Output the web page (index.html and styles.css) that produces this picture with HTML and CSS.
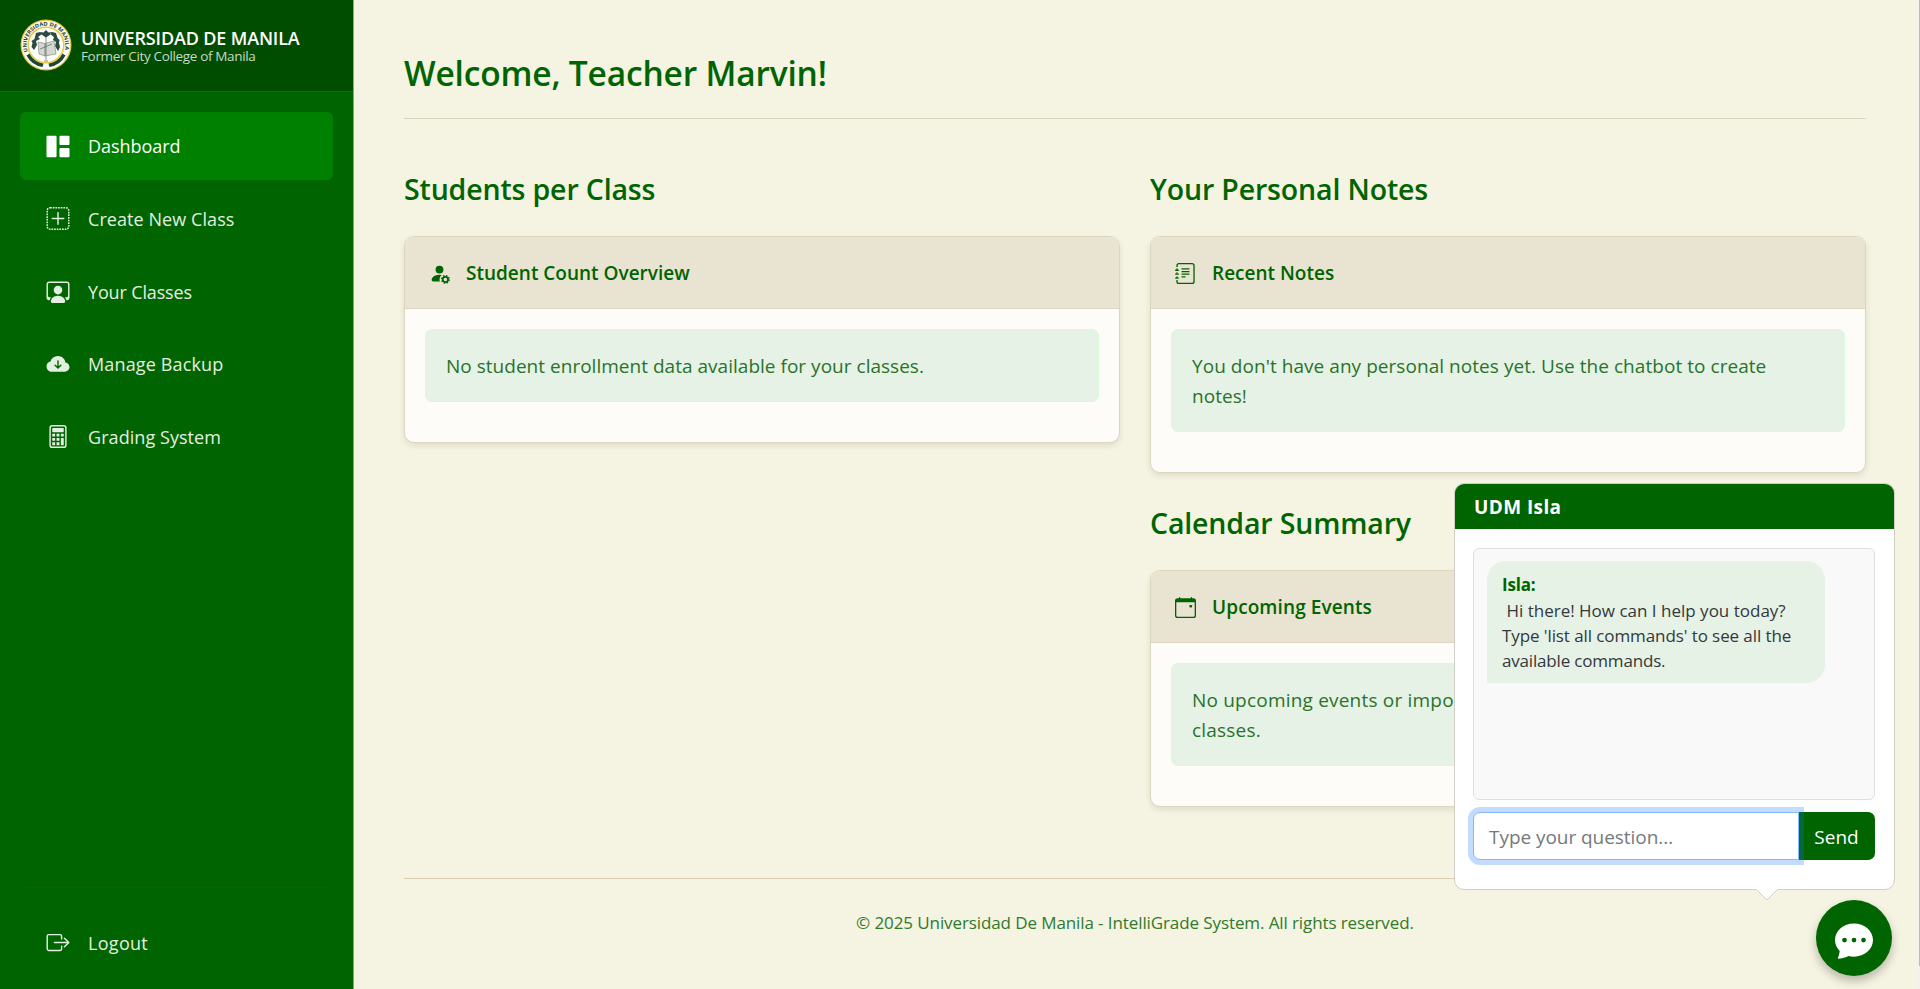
FILE: index.html
```html
<!DOCTYPE html>
<html lang="en">
<head>
<meta charset="utf-8">
<title>Dashboard - IntelliGrade System</title>
<link rel="stylesheet" href="styles.css">
</head>
<body>
<div class="page">
  <aside class="sidebar">
    <div class="brand">
      <svg class="brand-logo" viewBox="0 0 52 52">
        <defs><path id="ring" d="M7.900 32.600a19.300 19.300 0 1 1 36.200 0"/></defs>
        <circle cx="26" cy="26" r="25.500" fill="#e3c53c"/>
        <circle cx="26" cy="26" r="24.300" fill="#fbfaf2"/>
        <path d="M6.500 36.500a22 22 0 0 0 16 11.500l1-3.600a19 19 0 0 1-13.800-10zM45.500 36.500a22 22 0 0 1-16 11.500l-1-3.600a19 19 0 0 0 13.800-10z" fill="#1d4634"/>
        <circle cx="26" cy="26" r="17.800" fill="#fdfdfa" stroke="#e6c945" stroke-width="1.600"/>
        <text class="seal-text"><textPath href="#ring" textLength="72" lengthAdjust="spacingAndGlyphs">UNIVERSIDAD DE MANILA</textPath></text>
        <path d="M26 11l2.500 2.500 3-.5-1 2.600-4.500 3-4.500-3-1-2.600 3 .5zM16 14l4-1 2 2-4 3 2 2-4 2 1 4-3 5-2.500-3 1-4-1-2 3-2zM36 14l-4-1-2 2 4 3-1 3 3 2-1 4 3 5 2-4-1-4 .5-3-2-2z" fill="#2b4a40"/>
        <path d="M18 23l7 1.500V37l-6-2zM34 22l-9 2.500V37l11-2z" fill="#d5d7d3" stroke="#888d88" stroke-width=".7"/>
        <path d="M26 18v23M20 30l12-5M24 42h4" stroke="#69716c" stroke-width=".8"/>
        <circle cx="26" cy="47" r="1.700" fill="#fff"/>
      </svg>
      <div class="brand-copy">
        <div class="brand-name">UNIVERSIDAD DE MANILA</div>
        <div class="brand-sub">Former City College of Manila</div>
      </div>
    </div>
    <nav class="menu">
      <a class="item active"><svg class="icon" viewBox="0 0 16 16"><path d="M0 1.200a.7.700 0 0 1 .7-.7h5.600a.7.700 0 0 1 .7.700v13.600a.7.700 0 0 1-.7.700H.7a.7.700 0 0 1-.7-.7zM9 1.200a.7.700 0 0 1 .7-.7h5.600a.7.700 0 0 1 .7.700v5.100a.7.700 0 0 1-.7.700H9.700a.7.700 0 0 1-.7-.7zM9 9.700a.7.700 0 0 1 .7-.7h5.600a.7.700 0 0 1 .7.700v5.100a.7.700 0 0 1-.7.700H9.700a.7.700 0 0 1-.7-.7z"/></svg><span class="t-dash">Dashboard</span></a>
      <a class="item"><svg class="icon" viewBox="0 0 16 16"><rect x=".5" y=".5" width="15" height="15" rx="2" fill="none" stroke="currentColor" stroke-dasharray="1.200 .65"/><path d="M8.500 4a.5.500 0 0 0-1 0v3.500H4a.5.500 0 0 0 0 1h3.500V12a.5.500 0 0 0 1 0V8.500H12a.5.500 0 0 0 0-1H8.500z"/></svg><span class="t-create">Create New Class</span></a>
      <a class="item"><svg class="icon" viewBox="0 0 16 16"><path d="M11 7a3 3 0 1 1-6 0 3 3 0 0 1 6 0z"/><path d="M2 1a2 2 0 0 0-2 2v9.500A1.500 1.500 0 0 0 1.500 14h.653a5.400 5.400 0 0 1 1.066-2H2a1 1 0 0 1-1-1V3a1 1 0 0 1 1-1h12a1 1 0 0 1 1 1v8a1 1 0 0 1-1 1h-1.220c.554.654.89 1.373 1.066 2h.653a1.500 1.500 0 0 0 1.500-1.500V3a2 2 0 0 0-2-2z"/><path d="M3 15c0-1 1-4 5-4s5 3 5 4c0 .5-.4 1-1 1H4c-.6 0-1-.5-1-1z"/></svg><span class="t-your">Your Classes</span></a>
      <a class="item"><svg class="icon" viewBox="0 0 16 16"><path d="M8 2a5.530 5.530 0 0 0-3.594 1.342c-.766.66-1.321 1.520-1.464 2.383C1.266 6.095 0 7.555 0 9.318 0 11.366 1.708 13 3.781 13h8.906C14.502 13 16 11.570 16 9.773c0-1.636-1.242-2.969-2.834-3.194C12.923 3.999 10.690 2 8 2m2.354 6.854-2 2a.5.500 0 0 1-.708 0l-2-2a.5.500 0 1 1 .708-.708L7.500 9.293V5.500a.5.500 0 0 1 1 0v3.793l1.146-1.147a.5.500 0 0 1 .708.708"/></svg><span class="t-backup">Manage Backup</span></a>
      <a class="item"><svg class="icon" viewBox="0 0 16 16"><path fill-rule="evenodd" d="M4 0h8a2 2 0 0 1 2 2v12a2 2 0 0 1-2 2H4a2 2 0 0 1-2-2V2a2 2 0 0 1 2-2m0 1a1 1 0 0 0-1 1v12a1 1 0 0 0 1 1h8a1 1 0 0 0 1-1V2a1 1 0 0 0-1-1z"/><path d="M4 2.500a.5.500 0 0 1 .5-.5h7a.5.500 0 0 1 .5.500v2a.5.500 0 0 1-.5.500h-7a.5.500 0 0 1-.5-.5zM4 6h2v2H4zM7 6h2v2H7zM10 6h2v2h-2zM4 9h2v2H4zM7 9h2v2H7zM4 12h2v2H4zM7 12h2v2H7zM10 9h2v5h-2z"/></svg><span class="t-grading">Grading System</span></a>
    </nav>
    <div class="logout">
      <a class="item"><svg class="icon" viewBox="0 0 16 16"><path d="M10 12.500a.5.500 0 0 1-.5.500h-8a.5.500 0 0 1-.5-.5v-9a.5.500 0 0 1 .5-.5h8a.5.500 0 0 1 .5.500v2a.5.500 0 0 0 1 0v-2A1.500 1.500 0 0 0 9.500 2h-8A1.500 1.500 0 0 0 0 3.500v9A1.500 1.500 0 0 0 1.500 14h8a1.500 1.500 0 0 0 1.500-1.500v-2a.5.500 0 0 0-1 0z"/><path d="M15.854 8.354a.5.500 0 0 0 0-.708l-3-3a.5.500 0 0 0-.708.708L14.293 7.500H5.500a.5.500 0 0 0 0 1h8.793l-2.147 2.146a.5.500 0 0 0 .708.708z"/></svg><span class="t-logout">Logout</span></a>
    </div>
  </aside>

  <main class="content">
    <h1 class="welcome">Welcome, Teacher Marvin!</h1>
    <div class="columns">
      <section class="col">
        <h2 class="title">Students per Class</h2>
        <article class="card">
          <header class="card-head"><svg class="head-icon" viewBox="0 0 16 16"><path d="M11 5a3 3 0 1 1-6 0 3 3 0 0 1 6 0m-9 8c0 1 1 1 1 1h5.256A4.500 4.500 0 0 1 8 12.500a4.500 4.500 0 0 1 1.544-3.393Q8.844 9.002 8 9c-5 0-6 3-6 4"/><circle cx="12.500" cy="12.500" r="2" fill="none" stroke="currentColor" stroke-width="1.300"/><circle cx="12.500" cy="12.500" r="2.900" fill="none" stroke="currentColor" stroke-width="1" stroke-dasharray="1.200 1.077"/></svg><span>Student Count Overview</span></header>
          <div class="card-body"><div class="alert"><span class="t-noenroll">No student enrollment data available for your classes.</span></div></div>
        </article>
      </section>
      <section class="col">
        <h2 class="title">Your Personal Notes</h2>
        <article class="card">
          <header class="card-head"><svg class="head-icon" viewBox="0 0 16 16"><path d="M5 4h6v1H5zM5 6h6v1H5zM5 8h6v1H5zM5 10h3v1H5z"/><path d="M3 0h10a2 2 0 0 1 2 2v12a2 2 0 0 1-2 2H3a2 2 0 0 1-2-2v-1h1v1a1 1 0 0 0 1 1h10a1 1 0 0 0 1-1V2a1 1 0 0 0-1-1H3a1 1 0 0 0-1 1v1H1V2a2 2 0 0 1 2-2"/><path d="M1 5v-.5a.5.500 0 0 1 1 0V5h.5a.5.500 0 0 1 0 1h-2a.5.500 0 0 1 0-1zm0 3v-.5a.5.500 0 0 1 1 0V8h.5a.5.500 0 0 1 0 1h-2a.5.500 0 0 1 0-1zm0 3v-.5a.5.500 0 0 1 1 0v.5h.5a.5.500 0 0 1 0 1h-2a.5.500 0 0 1 0-1z"/></svg><span>Recent Notes</span></header>
          <div class="card-body"><div class="alert"><span class="t-nonotes">You don't have any personal notes yet. Use the chatbot to create<br>notes!</span></div></div>
        </article>
        <h2 class="title second">Calendar Summary</h2>
        <article class="card">
          <header class="card-head"><svg class="head-icon" viewBox="0 0 16 16"><path d="M11 6.500a.5.500 0 0 1 .5-.5h1a.5.500 0 0 1 .5.500v1a.5.500 0 0 1-.5.500h-1a.5.500 0 0 1-.5-.5z"/><path d="M3.500 0a.5.500 0 0 1 .5.500V1h8V.5a.5.500 0 0 1 1 0V1h1a2 2 0 0 1 2 2v11a2 2 0 0 1-2 2H2a2 2 0 0 1-2-2V3a2 2 0 0 1 2-2h1V.5a.5.500 0 0 1 .5-.5M1 4v10a1 1 0 0 0 1 1h12a1 1 0 0 0 1-1V4z"/></svg><span class="t-upcoming">Upcoming Events</span></header>
          <div class="card-body"><div class="alert"><span class="t-noevents">No upcoming events or important dates found for your<br>classes.</span></div></div>
        </article>
      </section>
    </div>
    <footer class="footer"><span>© 2025 Universidad De Manila - IntelliGrade System. All rights reserved.</span></footer>
  </main>
</div>

<section class="chat">
  <header class="chat-head"><span>UDM Isla</span></header>
  <div class="chat-body">
    <div class="messages">
      <div class="bubble">
        <strong class="sender">Isla:</strong>
        <p class="message"><span>&nbsp;Hi there! How can I help you today?</span><br><span class="t-type">Type 'list all commands' to see all the</span><br><span class="t-avail">available commands.</span></p>
      </div>
    </div>
    <div class="ask">
      <div class="ask-input"><span>Type your question...</span></div>
      <div class="ask-send"><span>Send</span></div>
    </div>
  </div>
  <svg class="chat-arrow" viewBox="0 0 22 12"><path d="M0 0h22L11 11z" fill="#fff"/><path d="M.5 .5L11 11 21.500 .5" fill="none" stroke="#cfcfc5"/></svg>
</section>
<button class="chat-toggle"><svg class="toggle-icon" viewBox="0 0 16 16"><path d="M16 8c0 3.866-3.582 7-8 7a9 9 0 0 1-2.347-.306c-.584.296-1.925.864-4.181 1.234-.2.032-.352-.176-.273-.362.354-.836.674-1.950.77-2.966C.744 11.370 0 9.760 0 8c0-3.866 3.582-7 8-7s8 3.134 8 7M5 8a1 1 0 1 0-2 0 1 1 0 0 0 2 0m4 0a1 1 0 1 0-2 0 1 1 0 0 0 2 0m3 1a1 1 0 1 0 0-2 1 1 0 0 0 0 2"/></svg></button>
<div class="scroll-edge"><div class="scroll-thumb"></div></div>
</body>
</html>
```
FILE: styles.css
```css
* { box-sizing: border-box; }
body {
  margin: 0;
  height: 989px;
  overflow: hidden;
  background: #f5f3e1;
  font-family: "Open Sans", "Noto Sans", sans-serif;
  font-size: 19px;
  line-height: 30px;
  color: #006400;
}
svg { display: block; fill: currentColor; flex: none; }
span { white-space: nowrap; }
.page { display: flex; height: 989px; }

/* Sidebar */
.sidebar {
  display: flex;
  flex-direction: column;
  width: 354px;
  flex: none;
  background: #006400;
  border-right: 1px solid #7fb077;
  color: #e3efe0;
}
.brand {
  display: flex;
  align-items: center;
  gap: 9px;
  height: 92px;
  padding: 0 20px 1px;
  background: #004d00;
  border-bottom: 1px solid #007500;
}
.brand-logo { width: 52px; height: 52px; }
.seal-text { font-size: 5.200px; font-weight: 700; fill: #23402f; }
.brand-copy { padding-top: 1px; }
.brand-name { font-size: 18px; font-weight: 600; line-height: 20px; color: #fff; white-space: nowrap; letter-spacing: -.15px; }
.brand-sub { font-size: 13.500px; line-height: 16px; color: #c9d8c6; white-space: nowrap; letter-spacing: -.35px; }
.menu { display: flex; flex-direction: column; gap: 5px; padding: 20px 20px 0; }
.item {
  display: flex;
  align-items: center;
  gap: 18px;
  height: 67.650px;
  padding: 1px 0 0 26px;
  border-radius: 6px;
  font-size: 18px;
}
.active { background: #008000; color: #fff; }
.icon { width: 24px; height: 23px; }
.t-dash { letter-spacing: -.05px; }
.t-create { letter-spacing: .07px; }
.t-your { letter-spacing: -.15px; }
.t-backup { letter-spacing: .14px; }
.t-grading { letter-spacing: .06px; }
.t-logout { letter-spacing: .3px; }
.logout { margin: auto 20px 13px; padding-top: 20px; border-top: 1px solid #006a00; }

/* Main column */
.content { flex: 1; padding: 50px 54px 0 50px; }
.welcome {
  margin: 0;
  height: 69px;
  border-bottom: 1px solid #d8d4bc;
  font-size: 33.500px;
  font-weight: 600;
  line-height: 46px;
  letter-spacing: -.18px;
}
.columns { display: grid; grid-template-columns: 716px 716px; gap: 30px; height: 759px; padding-top: 50px; }
.title { margin: 0 0 26px; font-size: 28.500px; font-weight: 600; line-height: 41px; letter-spacing: -.15px; white-space: nowrap; }
.second { margin-top: 30px; }
.card {
  border: 1px solid #dcd6bf;
  border-radius: 10px;
  background: #fdfcf8;
  box-shadow: 0 3px 6px rgba(0, 0, 0, .09);
  overflow: hidden;
}
.card-head {
  display: flex;
  align-items: center;
  gap: 16px;
  height: 72px;
  padding: 1px 0 0 24px;
  background: #e9e4d1;
  border-bottom: 1px solid #dcd6bf;
  font-weight: 600;
}
.head-icon { width: 21px; height: 21px; }
.t-upcoming { letter-spacing: .1px; }
.card-body { padding: 20px 20px 40px; }
.alert {
  padding: 21px 20px 20px;
  border: 1px solid #d8f8d8;
  border-radius: 7px;
  background: #e6f2e6;
  color: #2a722a;
}
.t-noenroll { letter-spacing: .02px; }
.t-nonotes { letter-spacing: .05px; }
.t-noevents { letter-spacing: .2px; }
.footer {
  display: flex;
  justify-content: center;
  border-top: 1px solid #d8ccb0;
  padding-top: 29px;
  font-size: 17px;
  letter-spacing: -.1px;
  color: #2f7a2b;
}

/* Chat popover */
.chat {
  position: absolute;
  left: 1454px;
  top: 483px;
  width: 441px;
  height: 407px;
  border: 1px solid #cfcfc5;
  border-radius: 10px;
  background: #fff;
}
.chat-head {
  display: flex;
  align-items: center;
  height: 45px;
  padding-left: 19px;
  border-radius: 9px 9px 0 0;
  background: #006400;
  color: #fff;
  font-weight: 700;
  letter-spacing: .4px;
}
.chat-body { padding: 19px 19px 0 18px; }
.messages {
  height: 252px;
  padding: 12px 13px;
  border: 1px solid #dfdfdf;
  border-radius: 6px;
  background: #f9f9f9;
}
.bubble {
  width: 338px;
  height: 122px;
  padding: 10px 15px;
  border-radius: 19px 19px 19px 0;
  background: #e6f2e6;
  font-size: 17px;
}
.sender { display: block; line-height: 27px; letter-spacing: -.2px; }
.message { margin: 1px 0 0; line-height: 24.800px; color: #33383c; }
.t-type { letter-spacing: -.09px; }
.t-avail { letter-spacing: -.18px; }
.ask { display: flex; height: 48px; margin-top: 12px; }
.ask-input {
  position: relative;
  display: flex;
  align-items: center;
  width: 326px;
  padding: 2px 0 0 15px;
  border: 1px solid #86b7fe;
  border-radius: 7px 0 0 7px;
  background: #fff;
  box-shadow: 0 0 0 5px rgba(13, 110, 253, .25);
  color: #75797d;
  letter-spacing: -.05px;
}
.ask-send {
  display: flex;
  align-items: center;
  justify-content: center;
  flex: 1;
  padding: 2px 1px 0 0;
  border-radius: 0 7px 7px 0;
  background: #006400;
  color: #fff;
}
.chat-arrow { position: absolute; left: 301px; top: 405px; width: 22px; height: 12px; }
.chat-toggle {
  position: absolute;
  left: 1816px;
  top: 900px;
  display: flex;
  align-items: center;
  justify-content: center;
  width: 76px;
  height: 76px;
  padding: 4px 0 0;
  border: 0;
  border-radius: 50%;
  background: #006400;
  color: #fff;
  box-shadow: 0 5px 10px rgba(0, 0, 0, .25);
}
.toggle-icon { width: 38px; height: 38px; }
.scroll-edge { position: absolute; left: 1918px; top: 0; display: flex; justify-content: flex-end; width: 2px; height: 989px; background: #f1f1ee; }
.scroll-thumb { width: 1px; height: 966px; background: #b9bbbd; }
```
